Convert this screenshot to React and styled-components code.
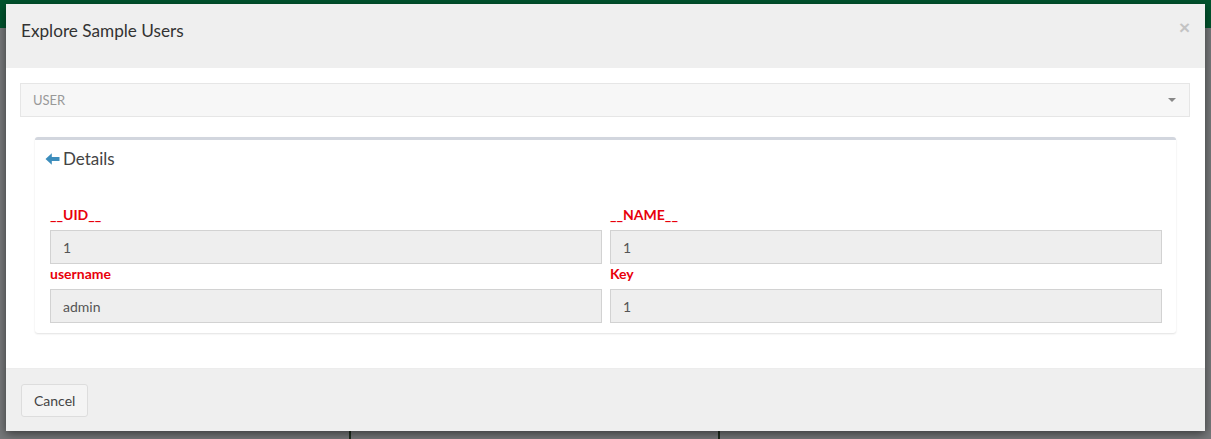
import React from 'react';
import styled, { createGlobalStyle } from 'styled-components';

const GlobalStyle = createGlobalStyle`
  html, body {
    margin: 0;
    padding: 0;
    background: #ecf0f5;
    font-family: Lato, "Liberation Sans", sans-serif;
  }
  * { box-sizing: border-box; }
`;

// underlying page, dimmed by the backdrop
const Page = styled.div`
  height: 439px;
  overflow: hidden;
  position: relative;
  display: flex;
  flex-direction: column;
`;

const TopNav = styled.div`
  height: 28px;
  background: #00a65a;
  flex-shrink: 0;
`;

const Canvas = styled.div`
  flex: 1;
  display: flex;
  gap: 367px;
  padding-left: 349px;
`;

const Link = styled.div`
  width: 2px;
  background: #3f5a3f;
`;

const Backdrop = styled.div`
  position: absolute;
  inset: 0;
  background: rgba(0, 0, 0, 0.5);
`;

const Modal = styled.div`
  position: absolute;
  left: 6px;
  top: 4px;
  width: 1199px;
  background: #fff;
  box-shadow: 0 3px 9px rgba(0, 0, 0, 0.5);
`;

const Header = styled.div`
  height: 64px;
  padding: 14px 15px 0 15px;
  background: #efefef;
  display: flex;
  justify-content: space-between;
  align-items: flex-start;
`;

const Title = styled.h4`
  margin: 0;
  font-size: 17.2px;
  font-weight: 400;
  line-height: 26px;
  color: #333;
`;

const Close = styled.button`
  border: 0;
  background: none;
  padding: 0;
  font-size: 19px;
  line-height: 20px;
  font-weight: 700;
  color: #000;
  opacity: 0.18;
  cursor: pointer;
  font-family: "Liberation Sans", sans-serif;
`;

const Body = styled.div`
  padding: 15px 15px 15px 14px;
`;

const Select = styled.div`
  height: 34px;
  background: #f7f7f7;
  border: 1px solid #e6e6e6;
  display: flex;
  align-items: center;
  justify-content: space-between;
  padding: 0 13px 0 12px;
  font-size: 13px;
  color: #999;
`;

const Caret = styled.span`
  width: 0;
  height: 0;
  border-left: 4px solid transparent;
  border-right: 4px solid transparent;
  border-top: 4px solid #888;
`;

const Box = styled.div`
  margin: 20px 14px 20px 15px;
  border-top: 3px solid #d2d6de;
  border-radius: 3px;
  background: #fff;
  box-shadow: 0 1px 2px rgba(0, 0, 0, 0.12);
`;

const BoxHeader = styled.div`
  display: flex;
  align-items: center;
  gap: 3px;
  padding: 8px 10px 10px;
  font-size: 17px;
  line-height: 22px;
  color: #444;
`;

const BoxBody = styled.div`
  padding: 25px 14px 10px 15px;
  display: grid;
  grid-template-columns: 1fr 1fr;
  column-gap: 8px;
`;

const Field = styled.div`
  display: flex;
  flex-direction: column;
`;

const Label = styled.label`
  font-size: 14px;
  font-weight: 700;
  line-height: 20px;
  color: #e8000b;
  margin-bottom: 5px;
`;

const Input = styled.div`
  height: 34px;
  background: #eee;
  border: 1px solid #d2d2d2;
  padding: 0 12px;
  display: flex;
  align-items: center;
  font-size: 14px;
  color: #555;
`;

const Footer = styled.div`
  height: 63px;
  background: #efefef;
  border-top: 1px solid #ececec;
  padding: 15px;
`;

const Button = styled.button`
  height: 33px;
  padding: 0 12px;
  background: #f4f4f4;
  border: 1px solid #ddd;
  border-radius: 3px;
  font-family: inherit;
  font-size: 14px;
  color: #444;
`;

const ArrowLeft = () => (
  <svg width="15" height="14" viewBox="0 0 15 14">
    <path d="M0.5 7 L6.8 1.2 L6.8 5 L14.5 5 L14.5 9 L6.8 9 L6.8 12.8 Z" fill="#3c8dbc" />
  </svg>
);

const fields = [
  { label: '__UID__', value: '1' },
  { label: '__NAME__', value: '1' },
  { label: 'username', value: 'admin' },
  { label: 'Key', value: '1' },
];

const App = () => {
  return (
    <>
      <GlobalStyle />
      <Page>
        <TopNav />
        <Canvas>
          <Link />
          <Link />
        </Canvas>
        <Backdrop />
        <Modal>
          <Header>
            <Title>Explore Sample Users</Title>
            <Close>×</Close>
          </Header>
          <Body>
            <Select>
              USER
              <Caret />
            </Select>
            <Box>
              <BoxHeader>
                <ArrowLeft />
                Details
              </BoxHeader>
              <BoxBody>
                {fields.map(f => (
                  <Field key={f.label}>
                    <Label>{f.label}</Label>
                    <Input>{f.value}</Input>
                  </Field>
                ))}
              </BoxBody>
            </Box>
          </Body>
          <Footer>
            <Button>Cancel</Button>
          </Footer>
        </Modal>
      </Page>
    </>
  );
};

export default App;
